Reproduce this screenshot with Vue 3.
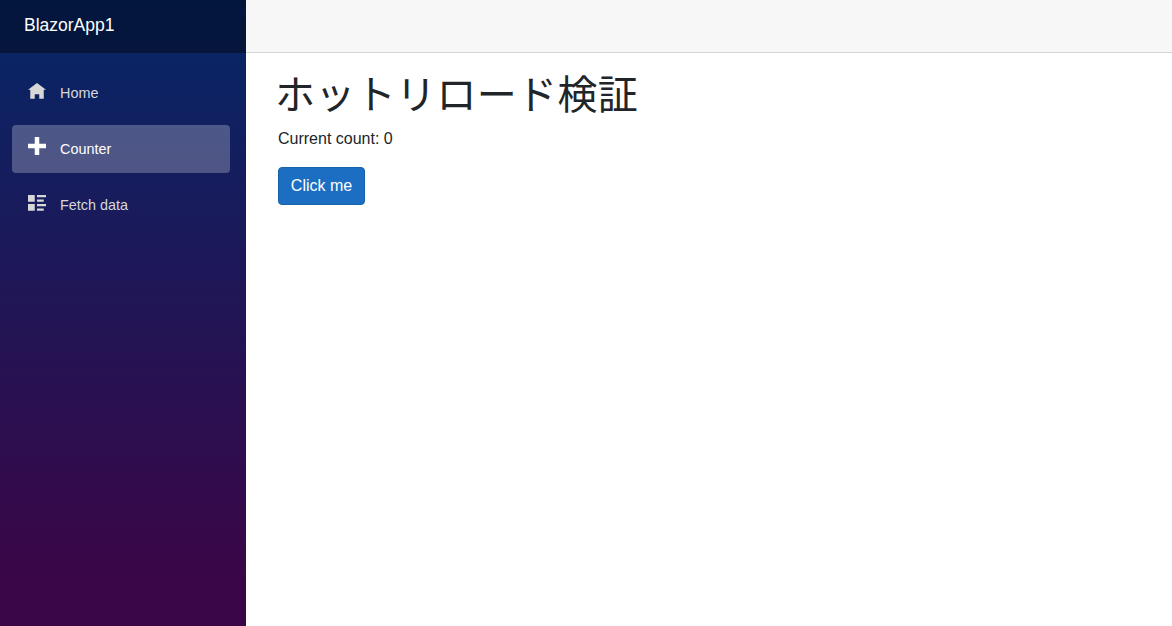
<script setup>
const items = [
  { label: 'Home', cls: 'icon-home', d: 'M4 0l-4 3h1v4h2v-2h2v2h2v-4.03l1 .03-4-3z', active: false },
  { label: 'Counter', cls: 'icon-plus', d: 'M3 0v3h-3v2h3v3h2v-3h3v-2h-3v-3h-2z', active: true },
  { label: 'Fetch data', cls: 'icon-list', d: 'M0 0v3h3v-3h-3zm4 0v1h4v-1h-4zm0 2v1h3v-1h-3zm-4 2v3h3v-3h-3zm4 0v1h4v-1h-4zm0 2v1h3v-1h-3z', active: false },
]
</script>

<template>
  <div class="page">
    <aside class="sidebar">
      <div class="brand"><a class="brand-link">BlazorApp1</a></div>
      <nav class="nav">
        <a v-for="item in items" :key="item.label" class="nav-link" :class="{ active: item.active }">
          <svg class="icon" :class="item.cls" viewBox="0 0 8 8" aria-hidden="true"><path :d="item.d" fill="currentColor" /></svg>
          <span>{{ item.label }}</span>
        </a>
      </nav>
    </aside>
    <main class="main">
      <div class="top-row"></div>
      <article class="content">
        <h1 class="title">ホットリロード検証</h1>
        <p class="count">Current count: 0</p>
        <button class="btn" type="button">Click me</button>
      </article>
    </main>
  </div>
</template>

<style>
html, body { margin: 0; padding: 0; background: #fff; }
</style>

<style scoped>
.page {
  display: flex;
  height: 626px;
  overflow: hidden;
  font-family: "Liberation Sans", Arial, "Noto Sans CJK JP", sans-serif;
  color: #212529;
}
.sidebar {
  width: 246px;
  flex: none;
  display: flex;
  flex-direction: column;
  background-image: linear-gradient(180deg, #052767 0%, #3a0647 92%);
}
.brand {
  height: 53px;
  flex: none;
  display: flex;
  align-items: center;
  padding-left: 24px;
  background: rgba(0, 0, 0, 0.4);
}
.brand-link {
  color: #fff;
  font-size: 17.5px;
  line-height: 25px;
  margin-top: -3px;
}
.nav {
  display: flex;
  flex-direction: column;
  gap: 8px;
  padding: 16px 16px 0 12px;
}
.nav-link {
  height: 48px;
  display: flex;
  align-items: center;
  border-radius: 4px;
  color: #d7d7d7;
  font-size: 14.4px;
}
.nav-link.active {
  background: rgba(255, 255, 255, 0.25);
  color: #fff;
}
.icon {
  width: 18px;
  height: 18px;
  margin: -2px 14px 0 16px;
  flex: none;
}
.icon-plus {
  margin-top: -6px;
}
.main {
  flex: 1;
  min-width: 0;
  display: flex;
  flex-direction: column;
}
.top-row {
  height: 52px;
  flex: none;
  background: #f7f7f7;
  border-bottom: 1px solid #d6d5d5;
}
.content {
  padding: 18px 32px 0;
}
.title {
  margin: 0 0 8px -3px;
  font-size: 40px;
  font-weight: 400;
  line-height: 48px;
  letter-spacing: 0.35px;
}
.count {
  margin: 0 0 16px;
  font-size: 16px;
  line-height: 24px;
}
.btn {
  display: block;
  width: 87px;
  height: 38px;
  padding: 0;
  border: 1px solid #1861ac;
  border-radius: 4px;
  background: #1b6ec2;
  color: #fff;
  font-family: inherit;
  font-size: 16px;
}
</style>
